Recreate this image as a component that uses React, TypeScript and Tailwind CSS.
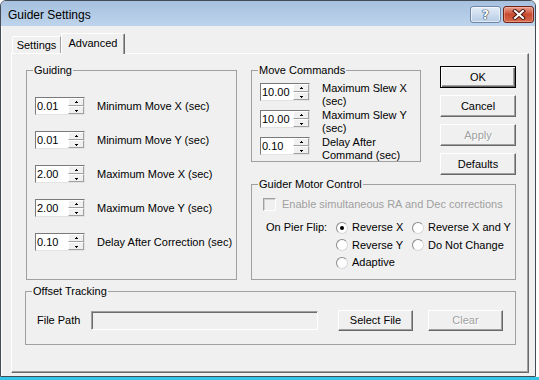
import React from "react";

function Arrow({ up }: { up?: boolean }) {
  return (
    <svg width="5" height="3" viewBox="0 0 5 3" className="block" shapeRendering="crispEdges">
      {up ? (
        <>
          <rect x="2" y="0" width="1" height="1" fill="#000" />
          <rect x="1" y="1" width="3" height="1" fill="#000" />
        </>
      ) : (
        <>
          <rect x="1" y="1" width="3" height="1" fill="#000" />
          <rect x="2" y="2" width="1" height="1" fill="#000" />
        </>
      )}
    </svg>
  );
}

function SpinBtn({ up }: { up?: boolean }) {
  return (
    <div className="flex h-[8px] items-center justify-center bg-[#f0f0f0] border border-t-white border-l-white border-r-[#a0a0a0] border-b-[#a0a0a0]">
      <Arrow up={up} />
    </div>
  );
}

function Spin({ v }: { v: string }) {
  return (
    <div className="flex h-[18px] w-[50px] shrink-0 bg-white border border-t-[#7a7a7a] border-l-[#7a7a7a] border-r-[#e3e3e3] border-b-[#e3e3e3]">
      <span className="flex-1 pl-[1px] text-[11px] leading-[16px]">{v}</span>
      <div className="flex w-[16px] flex-col">
        <SpinBtn up />
        <SpinBtn />
      </div>
    </div>
  );
}

function Radio({ sel, label }: { sel?: boolean; label: string }) {
  return (
    <div className="flex h-[17.5px] items-center gap-[4px]">
      <span className="flex h-[12px] w-[12px] shrink-0 items-center justify-center rounded-full bg-white border border-t-[#8a8a8a] border-l-[#8a8a8a] border-r-[#d8d8d8] border-b-[#d8d8d8]">
        {sel && <span className="h-[4px] w-[4px] rounded-full bg-black" />}
      </span>
      <span className="whitespace-nowrap leading-[13px]">{label}</span>
    </div>
  );
}

export default function App() {
  const guiding = [
    ["0.01", "Minimum Move X (sec)"],
    ["0.01", "Minimum Move Y (sec)"],
    ["2.00", "Maximum Move X (sec)"],
    ["2.00", "Maximum Move Y (sec)"],
    ["0.10", "Delay After Correction (sec)"],
  ];
  const moves = [
    ["10.00", "Maximum Slew X (sec)"],
    ["10.00", "Maximum Slew Y (sec)"],
    ["0.10", "Delay After Command (sec)"],
  ];
  const btn =
    "flex h-[22px] w-[76px] items-center justify-center bg-[#f0f0f0] border border-t-white border-l-white border-r-[#696969] border-b-[#696969] shadow-[inset_-1px_-1px_0_#a0a0a0]";
  return (
    <div className="flex h-[380px] w-[539px] flex-col bg-white font-['Liberation_Sans',Arial,sans-serif] text-[11px] text-black">
      <div className="flex h-[377px] w-[536px] flex-col overflow-hidden rounded-t-[6px] border border-[#434b55] bg-[#f0f0f0]">
        {/* title bar */}
        <div className="flex h-[25px] shrink-0 items-start bg-gradient-to-b from-[#a6c0de] to-[#bed4ec]">
          <span className="ml-[7px] mt-[7px] text-[12px] leading-[15px] text-black">Guider Settings</span>
          <div className="ml-auto mr-[1px] mt-[5px] flex gap-[2px]">
            <div className="flex h-[17px] w-[31px] items-center justify-center rounded-[3px] border border-[#6f87a6] bg-gradient-to-b from-[#e4edf7] to-[#b7cce5] shadow-[inset_0_0_0_1px_rgba(255,255,255,0.6)]">
              <span className="font-['DejaVu_Sans',sans-serif] text-[12px] font-bold leading-[12px] text-white [text-shadow:0_0_1px_#1e2f4a,0_0_1px_#1e2f4a,0_0_1px_#1e2f4a]">
                ?
              </span>
            </div>
            <div className="flex h-[17px] w-[31px] items-center justify-center rounded-[3px] border border-[#6e2417] bg-gradient-to-b from-[#e7a291] via-[#c9492f] to-[#d46a4d] shadow-[inset_0_0_0_1px_rgba(255,200,190,0.45)]">
              <svg width="14" height="11" viewBox="0 0 14 11">
                <path d="M3 2 L11 9 M11 2 L3 9" stroke="#4a1810" strokeWidth="4" strokeLinecap="square" />
                <path d="M3 2 L11 9 M11 2 L3 9" stroke="#fff" strokeWidth="2" strokeLinecap="square" />
              </svg>
            </div>
          </div>
        </div>
        {/* client */}
        <div className="flex flex-1 flex-col pb-[3px] pl-[10px] pr-[6px] pt-[7px] shadow-[inset_1px_0_0_#fff]">
          {/* tabs */}
          <div className="ml-[1px] flex h-[20px] items-end">
            <div className="flex h-[17px] w-[49px] items-center justify-center rounded-tl-[2px] border-l border-r border-t border-t-white border-l-white border-r-[#a0a0a0] leading-[13px]">
              Settings
            </div>
            <div className="relative z-10 -mb-[1px] flex h-[21px] w-[64px] items-center justify-center rounded-tl-[2px] rounded-tr-[2px] border-l border-r border-t border-t-white border-l-white border-r-[#696969] bg-[#f0f0f0] pb-[1px] leading-[13px] shadow-[inset_-1px_0_0_#a0a0a0]">
              Advanced
            </div>
          </div>
          {/* tab page */}
          <div className="flex h-[320px] w-[518px] flex-col border border-t-white border-l-white border-r-[#696969] border-b-[#696969] pl-[13px] pt-[10px] shadow-[inset_-1px_-1px_0_#a0a0a0]">
            <div className="flex items-start">
              {/* Guiding */}
              <fieldset className="ml-[1px] h-[216px] w-[211px] border border-[#a0a0a0]">
                <legend className="ml-[6px] px-[1px] leading-[13px]">Guiding</legend>
                <div className="flex flex-col gap-[16px] pl-[8px] pt-[20px]">
                  {guiding.map(([v, l], i) => (
                    <div key={i} className="flex h-[18px] items-center">
                      <Spin v={v} />
                      <span className="ml-[12px] whitespace-nowrap leading-[13px]">{l}</span>
                    </div>
                  ))}
                </div>
              </fieldset>
              {/* right area */}
              <div className="ml-[14px] flex w-[265px] flex-col">
                <div className="flex items-start">
                  <fieldset className="h-[98px] w-[170px] border border-[#a0a0a0]">
                    <legend className="ml-[6px] px-[1px] leading-[13px]">Move Commands</legend>
                    <div className="flex flex-col pl-[8px] pt-[6px]">
                      {moves.map(([v, l], i) => (
                        <div key={i} className="flex h-[27px] items-start">
                          <Spin v={v} />
                          <span className="-mt-[1px] ml-[12px] w-[88px] leading-[13px]">{l}</span>
                        </div>
                      ))}
                    </div>
                  </fieldset>
                  <div className="ml-[19px] mt-[2px] flex w-[76px] flex-col gap-[7px]">
                    <div className="flex h-[22px] w-[76px] items-center justify-center border border-black bg-[#f0f0f0] shadow-[inset_1px_1px_0_#fff,inset_-1px_-1px_0_#696969,inset_-2px_-2px_0_#a0a0a0]">
                      OK
                    </div>
                    <div className={btn}>Cancel</div>
                    <div className={btn}>
                      <span className="text-[#a0a0a0] [text-shadow:1px_1px_0_#fff]">Apply</span>
                    </div>
                    <div className={btn}>Defaults</div>
                  </div>
                </div>
                {/* Guider Motor Control */}
                <fieldset className="mt-[3px] h-[102px] w-[265px] border border-[#a0a0a0]">
                  <legend className="ml-[6px] px-[1px] leading-[13px]">Guider Motor Control</legend>
                  <div className="flex flex-col pl-[11px] pt-[7px]">
                    <div className="flex h-[13px] items-center">
                      <span className="h-[13px] w-[13px] shrink-0 border border-t-[#a0a0a0] border-l-[#a0a0a0] border-r-white border-b-white bg-[#f0f0f0] shadow-[inset_1px_1px_0_#d0d0d0]" />
                      <span className="ml-[6px] whitespace-nowrap leading-[13px] text-[#a0a0a0]">
                        Enable simultaneous RA and Dec corrections
                      </span>
                    </div>
                    <div className="ml-[3px] mt-[8px] flex items-start">
                      <span className="w-[70px] whitespace-nowrap leading-[17.5px]">On Pier Flip:</span>
                      <div className="grid grid-cols-[76px_auto]">
                        <Radio sel label="Reverse X" />
                        <Radio label="Reverse X and Y" />
                        <Radio label="Reverse Y" />
                        <Radio label="Do Not Change" />
                        <Radio label="Adaptive" />
                      </div>
                    </div>
                  </div>
                </fieldset>
              </div>
            </div>
            {/* Offset Tracking */}
            <fieldset className="mt-[5px] h-[60px] w-[491px] border border-[#a0a0a0]">
              <legend className="ml-[6px] px-[1px] leading-[13px]">Offset Tracking</legend>
              <div className="flex h-[33px] items-start pl-[11px] pt-[12px]">
                <div className="flex h-[21px] items-center">
                  <span className="w-[54px] whitespace-nowrap leading-[13px]">File Path</span>
                  <div className="h-[19px] w-[227px] border border-t-[#a0a0a0] border-l-[#a0a0a0] border-r-white border-b-white bg-[#f0f0f0] shadow-[inset_1px_1px_0_#6d6d6d]" />
                  <div className="ml-[20px] flex h-[21px] w-[75px] items-center justify-center border border-t-white border-l-white border-r-[#696969] border-b-[#696969] bg-[#f0f0f0] shadow-[inset_-1px_-1px_0_#a0a0a0]">
                    Select File
                  </div>
                  <div className="ml-[15px] flex h-[21px] w-[75px] items-center justify-center border border-t-white border-l-white border-r-[#696969] border-b-[#696969] bg-[#f0f0f0] shadow-[inset_-1px_-1px_0_#a0a0a0]">
                    <span className="text-[#a0a0a0] [text-shadow:1px_1px_0_#fff]">Clear</span>
                  </div>
                </div>
              </div>
            </fieldset>
          </div>
        </div>
      </div>
      <div className="h-[3px] w-full bg-[#35c3e8]" />
    </div>
  );
}
